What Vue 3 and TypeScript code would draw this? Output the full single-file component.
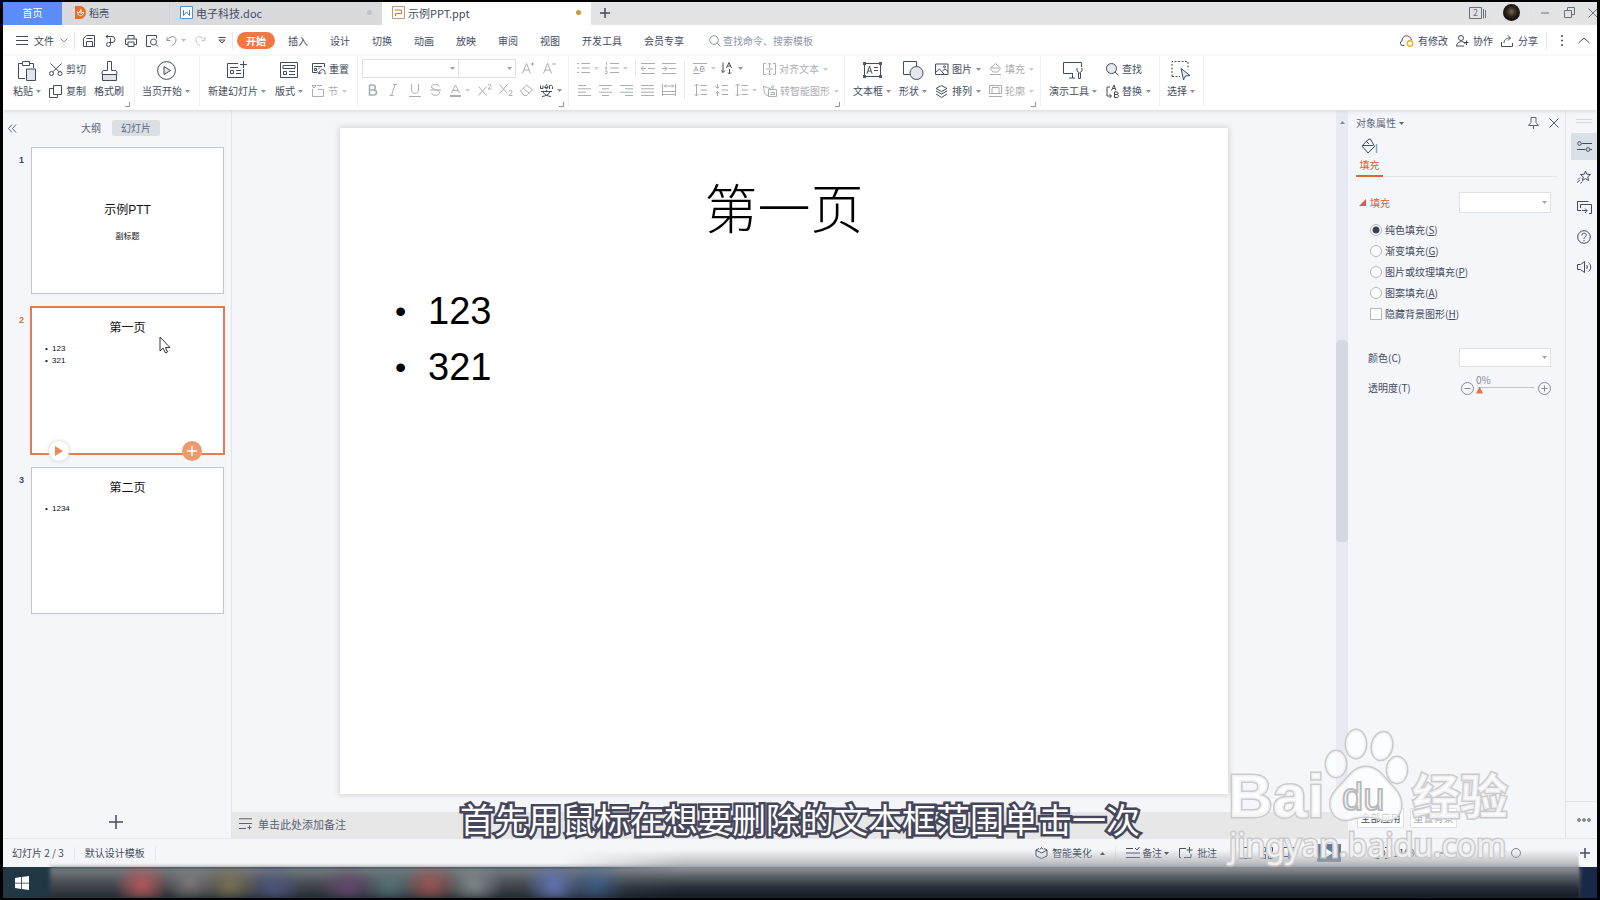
<script setup lang="ts">
import { h, ref } from 'vue'

type IconDef = [number, number, string]

const icons: Record<string, IconDef> = {
  caret: [5, 3, '<path d="M0 0h5L2.5 3z" fill="currentColor" stroke="none"/>'],
  caretUp: [5, 3, '<path d="M0 3h5L2.5 0z" fill="currentColor" stroke="none"/>'],
  corner: [5, 5, '<path d="M4.5 0v4.5H0"/>'],
  docer: [12, 13, '<path d="M1 0h5a6 6.5 0 0 1 0 13H1z" fill="#ee6a26" stroke="none"/><path d="M3.5 6c0 5 6 5 6 0L7 7.500V3.500L5 7z" stroke="#fff"/>'],
  word: [13, 13, '<path d="M.5.5h12v12H.5z" fill="#fff" stroke="#5a8fc4"/><path d="M3.500 4v5.500L6.500 6l3 3.500V4" stroke="#3f7fc0"/>'],
  ppt: [13, 13, '<path d="M.5.5h12v12H.5z" stroke="#c99873"/><path d="M3 4h6.500v3.500H3.500V10" stroke="#b87848"/>'],
  plus: [12, 12, '<path d="M6 1v10M1 6h10" stroke-width="1.5"/>'],
  burger: [12, 9, '<path d="M0 .5h12M0 4.500h12M0 8.500h12"/>'],
  chevDown: [8, 5, '<path d="m.5.5 3.500 3.500L7.500.5"/>'],
  save: [12, 12, '<path d="M.5 11.500v-8l3-3h8v11zM3.500 11V6.500h6V11M3.500 3.500h6"/>'],
  exportP: [12, 12, '<path d="M2 1.500h6a2.500 2.500 0 0 1 0 6H4.500a2 2 0 1 0 2 2V3M4 0 2 1.500 4 3.500"/>'],
  print: [12, 12, '<path d="M3 4V.5h6V4M3 9.500H.5V4h11v5.500H9M3 7h6v4.500H3z"/>'],
  preview: [13, 12, '<path d="M5 11.500H.5V.5h10v3M10 9.500l2 2"/><circle cx="7.500" cy="7" r="3"/>'],
  undo: [11, 10, '<path d="M1 1v3.500h3.500M1 4.500C4-.5 10-.5 10 4c0 3-2 4.500-4 5.500"/>'],
  redo: [11, 10, '<path d="M10 1v3.500H6.500M10 4.500C7-.5 1-.5 1 4c0 3 2 4.500 4 5.500"/>'],
  customise: [8, 7, '<path d="M.5.5h7M1 3l3 3 3-3z"/>'],
  search: [12, 12, '<circle cx="5" cy="5" r="4.300"/><path d="m8 8 3.500 3.500"/>'],
  cloud: [14, 12, '<path d="M4.500 10.500h-2A2.300 2.300 0 0 1 2 6C2-.5 10-1 11.500 5"/><circle cx="10" cy="8.500" r="2.700" stroke="#e9b432" stroke-width="1.500"/><path d="M8 5.500 11 6" stroke="#e9b432"/>'],
  people: [13, 12, '<circle cx="5" cy="3" r="2.500"/><path d="M.5 11.500C.5 5.500 9 5.500 9 9M1 11h7M8 7.500h4.500M10.500 5.500V10"/>'],
  share: [13, 12, '<path d="M.5 7v4.500h11V8M3 8c0-3 2-5 6-5M7 .5 9.500 3 7 5.500"/>'],
  more: [2, 11, '<path d="M0 1h2M0 5.500h2M0 10h2" stroke-width="1.500"/>'],
  chevUp: [12, 7, '<path d="m.5 6 5.500-5 5.500 5"/>'],
  windows2: [17, 12, '<path d="M.5.5h12v11H.5zM14.500 2v9.500M16.500 3v8"/>'],
  min: [8, 2, '<path d="M0 1h8"/>'],
  restore: [11, 11, '<path d="M.5 3.500h7v7h-7zM3.500 3V.5h7v7H8"/>'],
  close: [10, 10, '<path d="m.5.500 9 9m0-9-9 9"/>'],
  paste: [19, 20, '<path d="M7 17.500H.5v-15H4M12 2.500h3.500V7M4.500.5h7v4h-7z"/><path d="M8.500 8h9v11.500h-9z" fill="#e1e4ea"/>'],
  cut: [14, 13, '<path d="M3.500 9 12.500.5M10.500 9 1.500.5"/><circle cx="2.500" cy="10.500" r="2"/><circle cx="11" cy="10.500" r="2"/>'],
  copy: [14, 13, '<path d="M4.500.5h8v9h-8zM4 3.500H.5v9h8V10"/>'],
  brush: [17, 20, '<path d="M6.500 9.500v-9h4v9H14c2 0 2 2 2 4H1c0-2 0-4 2-4z"/><path d="M1.500 13.500h14v6h-14z" fill="#dfe2e8"/>'],
  playCircle: [19, 19, '<circle cx="9.500" cy="9.500" r="8.900"/><path d="M7 5.500 13.500 9.500 7 13.500z" fill="#e1e4ea"/>'],
  newSlide: [20, 18, '<path d="M11 2.500H.5v14h16V8M16.500 0v7M13 3.500h7M3 6.500h8M3.500 9.500h3v3h-3zM9 9.500h5M9 12.500h5"/>'],
  layout: [19, 18, '<path d="M.5 1.500h17v15H.5zM3 4.500h12v3H3zM3.500 10.500h3v3h-3zM9 10.500h6M9 13.500h6"/>'],
  reset: [14, 12, '<path d="M5 9.500H.5V.5h12V4M2 3.500h8M2.500 5.500h2v2h-2zM6 6.500l2-2M13 11.500c1-6-5-7-6-1M5.500 8.500 7 11l2.500-1.500"/>'],
  section: [13, 12, '<path d="M0 .5h4L2 3zM5 .5h5M.5 4v7.500h11v-7H6"/>'],
  bold: [10, 12, '<path d="M1.500 1v10h4c4 0 4-5 0-5H2M5 6c3 0 3-5 0-5H1.500" stroke-width="1.600"/>'],
  italic: [9, 12, '<path d="M4 .5h4M.5 11.500h4M6 .5l-3.500 11"/>'],
  underline: [12, 13, '<path d="M2.500 0v6c0 4.500 7 4.500 7 0V0M0 12.500h12"/>'],
  strike: [11, 12, '<path d="M9.500 2.500C8-.5 1-.5 1.500 3c.5 3 8 2 8 5.500s-7 4-8 .5M0 6h11"/>'],
  fontColor: [11, 13, '<path d="m1.500 9 4-8 4 8M3 6.500h5"/><path d="M0 12h11" stroke-width="2"/>'],
  sup: [14, 12, '<path d="m.5 2.500 8 9m0-9-8 9M10 1c2-2 4 0 2.500 1.500L10 5h3.500"/>'],
  sub: [14, 12, '<path d="m.5.500 8 9m0-9-8 9M10 7.500c2-2 4 0 2.500 1.500L10 11.500h3.500"/>'],
  eraser: [13, 12, '<path d="m.5 7 6-6 6 5-6 5.500H4zM3.500 4.500 9 9"/>'],
  pinyin: [13, 13, '<path d="M.5 1.500v3H3v-3M4.500 3.500H8c0-3-3-2.500-3-.5 0 1.500 1 1.500 2.500 1.500M9.500 5V1.500c3-.5 3 0 3 3.500M6.500.5l1-.5M1 7.500h11M6.500 6v1.500M3 8c1.500 3 4.500 4 8 4.500M10 8c-1.500 3-4.500 4-8 4.500"/>'],
  fontUp: [13, 12, '<path d="m.5 11.500 4-10 4 10M2 8h5M8.500 2h4M10.500 0v4"/>'],
  fontDown: [13, 12, '<path d="m.5 11.500 4-10 4 10M2 8h5M9 2h4"/>'],
  bullets: [13, 12, '<path d="M0 1.500h2M0 6h2M0 10.500h2M4.500 1.500H13M4.500 6H13M4.500 10.500H13"/>'],
  numbers: [14, 12, '<path d="M1.500 0v3M0 5h2L.500 7H2M0 9h2v2.500H0M5 1.500h9M5 6h9M5 10.500h9"/>'],
  outdent: [14, 11, '<path d="M0 .5h14M7 5.500h7M0 10.500h14M0 5.500h5M2.500 3 0 5.500 2.500 8"/>'],
  indent: [14, 11, '<path d="M0 .5h14M7 5.500h7M0 10.500h14M0 5.500h5M2.500 3 5 5.500 2.500 8"/>'],
  ab: [14, 11, '<path d="M0 .5h14M0 10.500h7M1 8.500l2-5 2 5M1.500 7h3M7.500 3.500v5h2.500c2 0 2-2.500 0-2.500H7.500M10 6c1.500 0 1.500-2.500 0-2.500H7.500"/>'],
  sortA: [13, 12, '<path d="M2 .5v10M.5 8.500 2 10.500l2-2M5.500 6l2.500-5.500L10.500 6M6.500 4h3M8.500 7v5M7 10.500l1.500 1.500L10 10.500"/>'],
  left: [13, 11, '<path d="M0 .5h8M0 3.800h13M0 7.200h8M0 10.500h13"/>'],
  center: [13, 11, '<path d="M0 .5h13M3 3.800h7M0 7.200h13M3 10.500h7"/>'],
  right: [13, 11, '<path d="M0 .5h13M5 3.800h8M0 7.200h13M5 10.500h8"/>'],
  justify: [13, 11, '<path d="M0 .5h13M0 3.800h13M0 7.200h13M0 10.500h13"/>'],
  spread: [14, 12, '<path d="M.5 0v12M13.500 0v12M2 2h10M4 .5 2.500 2 4 3.500M10 .5 11.500 2 10 3.500M1 7.500h12M1 10.500h12"/>'],
  lineUp: [13, 12, '<path d="M2.500 0v12M.5 2 2.500 0l2 2M.5 10l2 2 2-2M6.500 1.500H13M6.500 6H13M6.500 10.500H13"/>'],
  lineIn: [13, 12, '<path d="M2.500 0v4M.5 2.500l2 2 2-2M2.500 12V7.500M.5 9.500l2-2 2 2M6.500 1.500H13M6.500 6H13M6.500 10.500H13"/>'],
  alignText: [13, 12, '<path d="M3 .5H.5v11H3M10 .5h2.500v11H10M3 6h7M6.500 0v5M5 1.500 6.500 0 8 1.500M6.500 7v5M5 10.500 6.500 12 8 10.500"/>'],
  smart: [14, 12, '<path d="M5 10.500C2 10 1 8 .5 1l3 1.500 4 1 2.500-3V4M5.500 4.500h8v7h-8zM7.500 7.500h4v2h-4"/>'],
  textBox: [19, 18, '<path d="M1.500 2.500h16v13h-16zM4 12.500 6.500 5 9 12.500M5 10h3M11 6.500h4M11 9.500h4"/><path d="M0 1h3v3H0zM16 1h3v3h-3zM0 14h3v3H0zM16 14h3v3h-3z" fill="#525a6b" stroke="none"/>'],
  shape: [21, 19, '<path d="M.5.5h13v13H.5z" fill="#fff"/><circle cx="13.500" cy="12" r="6.500" fill="#e4e7ef"/>'],
  picture: [14, 12, '<path d="M.5 1h12.500v10.500H.5zM1 9l3.500-3L9 11M7.500 8 10 6l3 2.500"/><circle cx="9.500" cy="3.800" r="1"/>'],
  arrange: [14, 13, '<path d="M6.500.5 12 3.500 6.500 6.500 1 3.500zM1 6l5.500 3L12 6M1 9l5.500 3.500L12 9"/>'],
  fillTool: [13, 12, '<path d="m6.500.5 5 4.500-3 4H4L1 5.500zM2 5h8M1 11.500h11"/>'],
  outline: [13, 12, '<path d="M.5.5h12v8H.5zM3 2.500h7v6H3zM0 11.500h13"/>'],
  present: [21, 18, '<path d="M10 12.500H.5v-11h18V6M9.500 13v4M6 17h6M14 7v3l2.500 2L19 10V7M15.500 12v5.500h2V12"/>'],
  find: [13, 13, '<circle cx="5.500" cy="5.500" r="5" fill="#e6e9f0"/><path d="m9 9 3.500 3.500"/>'],
  replace: [13, 13, '<path d="M4 2H1v9h4M3.500 9 5.500 11l-2 2M5.500 5.500 8 0l2 5.500M6.500 3.500h3M8.500 7v5.500H11c2 0 2-3 0-3H8.500M11 9.500c1.500 0 1.500-2.500 0-2.500H8.500"/>'],
  select: [20, 20, '<path d="M1 15.500V.5h16v8M1 15.500h8" stroke-dasharray="2 1.500"/><path d="m10 7.500 9 7-4.500.5-2 4z" fill="#e4e7ee"/>'],
  collapse: [9, 9, '<path d="m4 .5-3.500 4 3.500 4m4-8-3.500 4 3.500 4"/>'],
  bigPlus: [14, 14, '<path d="M7 0v14M0 7h14" stroke-width="1.500"/>'],
  play: [8, 10, '<path d="m0 0 8 5-8 5z" fill="currentColor" stroke="none"/>'],
  pointer: [12, 18, '<path d="M1 1v14l3-3 2.500 5 2-1-2-4.500H11z" fill="#fff" stroke="#333"/>'],
  notes: [14, 12, '<path d="M0 .8h13M0 5.500h13M0 10.500h7M8.500 9.500h4M10.500 7.500v4"/>'],
  cube: [13, 12, '<path d="M4 1.500 1 3v6l5.500 2.500L12 9V3L9 1.500M1 3l5.500 3L12 3M5 2.500 6.500.5 8 2.500"/>'],
  remark: [14, 12, '<path d="M0 1.500h7M9 1l2 2 2.500-3M0 6h14M0 10.500h14"/>'],
  comment: [14, 12, '<path d="M7 1.500H.5v9H2M5 10.500h7V7M10.500 0v6M7.500 3h6"/>'],
  viewA: [13, 12, '<path d="M.5.5h12v11H.5zM4.500 0v12"/>'],
  viewB: [12, 12, '<path d="M.5.5h4v4h-4zM7.500.5h4v4h-4zM.5 7.500h4v4h-4zM7.500 7.500h4v4h-4z"/>'],
  viewC: [12, 12, '<path d="M5 .5H.5v9H5M7 .5h4.500v9H7M6 0v12"/>'],
  fit: [14, 12, '<path d="M.5 3V.5H4M10 .5h3.500V3M13.500 9v2.500H10M4 11.500H.5V9"/><circle cx="7" cy="6" r="3"/>'],
  pin: [11, 12, '<path d="M3 .5h5v5l2.500 3H.5L3 5.500zM5.500 8.500V12"/>'],
  bucket: [17, 16, '<path d="M7 1.500 1 8l6 7 6.500-6.500L9.500 1 7 1.500M2 7.500h10M5 3l3 3"/><path d="M15.500 6v9" stroke="#7fa9d0" stroke-width="1.500"/>'],
  sliders: [15, 11, '<circle cx="2.500" cy="2.500" r="1.800"/><path d="M5 2.500h10M0 8.500h8.500"/><circle cx="11" cy="8.500" r="1.800"/><path d="M13 8.500h2"/>'],
  star: [14, 14, '<path d="m8.500 1 1.300 3.200 3.700.3-2.800 2.400.9 3.600-3.100-1.900-3.100 1.900.9-3.600L3.500 4.500l3.700-.3zM1 9.500l2-2M0 12.500l3-2.500M3.500 13.500l2-2"/>'],
  copyPane: [15, 13, '<path d="M4 9.500H.5v-9h11M12 3.500h2.500v9H12M3.500 3.500H12M3.500 3.500V7M5 9.500h5M8 7.500l2 2-2 2.500"/>'],
  help: [14, 14, '<circle cx="7" cy="7" r="6.300"/><path d="M4.800 5.500c0-3 4.500-3 4.500-.3C9.300 7 7 7 7 8.700M7 10v1.200"/>'],
  sound: [15, 12, '<path d="M.5 3.500h3l4-3v11l-4-3h-3zM9.500 4c1 1 1 3 0 4M11.500 1.500c3 2.500 3 6.500 0 9"/>'],
  dots: [14, 4, '<circle cx="2" cy="2" r="1.300"/><circle cx="7" cy="2" r="1.300"/><circle cx="12" cy="2" r="1.300"/>'],
  minusRound: [13, 13, '<circle cx="6.500" cy="6.500" r="6"/><path d="M3.500 6.500h6"/>'],
  plusRound: [13, 13, '<circle cx="6.500" cy="6.500" r="6"/><path d="M3.500 6.500h6M6.500 3.500v6"/>'],
  triangle: [7, 7, '<path d="M7 0v7H0z" fill="#d95f33" stroke="none"/>'],
  start: [14, 14, '<path d="M0 2 6 1v5.700H0zM6.800.9 14 0v6.700H6.800zM0 7.400h6v5.700L0 12zM6.800 7.400H14V14l-7.200-.9z" fill="#fff" stroke="none"/>'],
}

const Icon = (props: { n: string }) => {
  const [w, ht, body] = icons[props.n]
  return h('svg', { width: w, height: ht, viewBox: `0 0 ${w} ${ht}`, fill: 'none', stroke: 'currentColor', 'stroke-width': 1, 'aria-hidden': 'true', innerHTML: body })
}
Icon.props = ['n']

const quick = ['save', 'exportP', 'print', 'preview']
const menus = ['开始', '插入', '设计', '切换', '动画', '放映', '审阅', '视图', '开发工具', '会员专享']
const fontTools = ['bold', 'italic', 'underline', 'strike']
const aligns = ['left', 'center', 'right', 'justify', 'spread']
const slides = [
  { title: '示例PTT', sub: '副标题', items: [] as string[] },
  { title: '第一页', sub: '', items: ['123', '321'] },
  { title: '第二页', sub: '', items: ['1234'] },
]
const active = ref(1)
const fills = [
  { text: '纯色填充', key: 'S' },
  { text: '渐变填充', key: 'G' },
  { text: '图片或纹理填充', key: 'P' },
  { text: '图案填充', key: 'A' },
]
const fill = ref('S')
const opacity = ref(0)
const rail = ['sliders', 'star', 'copyPane', 'help', 'sound']
</script>

<template>
  <div class="app">
    <header class="tabs">
      <button class="tab home">首页</button>
      <button class="tab docer"><Icon n="docer" />稻壳</button>
      <button class="tab doc"><Icon n="word" />电子科技.doc<i class="dot"></i></button>
      <button class="tab ppt"><Icon n="ppt" />示例PPT.ppt<i class="dot gold"></i></button>
      <button class="add" aria-label="新建"><Icon n="plus" /></button>
      <div class="win">
        <button class="count" aria-label="窗口"><Icon n="windows2" /><span>2</span></button>
        <i class="sep"></i>
        <span class="avatar"></span>
        <i class="sep"></i>
        <button aria-label="最小化"><Icon n="min" /></button>
        <button aria-label="还原"><Icon n="restore" /></button>
        <button aria-label="关闭"><Icon n="close" /></button>
      </div>
    </header>

    <nav class="menu">
      <button class="file"><Icon n="burger" />文件<Icon n="chevDown" class="faint" /></button>
      <i class="sep"></i>
      <div class="quick">
        <button v-for="q in quick" :key="q" class="t" :aria-label="q"><Icon :n="q" /></button>
        <button class="t wide faint" aria-label="撤销"><Icon n="undo" /><Icon n="caret" /></button>
        <button class="t pale" aria-label="恢复"><Icon n="redo" /></button>
        <button class="t" aria-label="自定义"><Icon n="customise" /></button>
      </div>
      <i class="sep"></i>
      <div class="items">
        <button v-for="(m, i) in menus" :key="m" :class="{ on: i === 0 }">{{ m }}</button>
      </div>
      <label class="search"><Icon n="search" /><input type="text" placeholder="查找命令、搜索模板" aria-label="查找命令、搜索模板" /></label>
      <div class="account">
        <button><Icon n="cloud" />有修改</button>
        <button><Icon n="people" />协作</button>
        <button><Icon n="share" />分享</button>
        <i class="sep"></i>
        <button aria-label="更多"><Icon n="more" /></button>
        <button aria-label="收起"><Icon n="chevUp" /></button>
      </div>
    </nav>

    <section class="ribbon">
      <div class="group g1">
        <button class="big"><Icon n="paste" /><span>粘贴<Icon n="caret" /></span></button>
        <div class="stack">
          <button><Icon n="cut" />剪切</button>
          <button><Icon n="copy" />复制</button>
        </div>
        <button class="big"><Icon n="brush" /><span>格式刷</span></button>
        <Icon n="corner" class="corner" />
      </div>
      <div class="group g2">
        <button class="big"><Icon n="playCircle" /><span>当页开始<Icon n="caret" /></span></button>
      </div>
      <div class="group g3">
        <button class="big"><Icon n="newSlide" /><span>新建幻灯片<Icon n="caret" /></span></button>
        <button class="big"><Icon n="layout" /><span>版式<Icon n="caret" /></span></button>
        <div class="stack">
          <button><Icon n="reset" />重置</button>
          <button class="off"><Icon n="section" />节<Icon n="caret" /></button>
        </div>
      </div>
      <div class="group g4">
        <div class="rows off">
          <div class="row">
            <div class="combo"><select class="face" aria-label="字体"></select><Icon n="caret" /></div>
            <div class="combo"><select class="size" aria-label="字号"></select><Icon n="caret" /></div>
            <button class="t" aria-label="增大字号"><Icon n="fontUp" /></button>
            <button class="t" aria-label="减小字号"><Icon n="fontDown" /></button>
          </div>
          <div class="row">
            <button v-for="f in fontTools" :key="f" class="t" :aria-label="f"><Icon :n="f" /></button>
            <button class="t wide" aria-label="字体颜色"><Icon n="fontColor" /><Icon n="caret" /></button>
            <button class="t" aria-label="上标"><Icon n="sup" /></button>
            <button class="t" aria-label="下标"><Icon n="sub" /></button>
            <button class="t" aria-label="清除格式"><Icon n="eraser" /></button>
            <button class="t wide live" aria-label="拼音"><Icon n="pinyin" /><Icon n="caret" /></button>
          </div>
        </div>
        <Icon n="corner" class="corner" />
      </div>
      <div class="group g5">
        <div class="rows off">
          <div class="row">
            <button class="t wide" aria-label="项目符号"><Icon n="bullets" /><Icon n="caret" /></button>
            <button class="t wide" aria-label="编号"><Icon n="numbers" /><Icon n="caret" /></button>
            <i class="sep"></i>
            <button class="t" aria-label="减少缩进"><Icon n="outdent" /></button>
            <button class="t" aria-label="增加缩进"><Icon n="indent" /></button>
          </div>
          <div class="row">
            <button v-for="a in aligns" :key="a" class="t" :aria-label="a"><Icon :n="a" /></button>
          </div>
        </div>
        <i class="sep tall"></i>
        <div class="rows off">
          <div class="row">
            <button class="t wide" aria-label="字符间距"><Icon n="ab" /><Icon n="caret" /></button>
            <button class="t wide live" aria-label="文字方向"><Icon n="sortA" /><Icon n="caret" /></button>
          </div>
          <div class="row">
            <button class="t" aria-label="段前"><Icon n="lineUp" /></button>
            <button class="t" aria-label="段后"><Icon n="lineIn" /></button>
            <button class="t wide" aria-label="行距"><Icon n="lineUp" /><Icon n="caret" /></button>
          </div>
        </div>
        <div class="stack off">
          <button><Icon n="alignText" />对齐文本<Icon n="caret" /></button>
          <button><Icon n="smart" />转智能图形<Icon n="caret" /></button>
        </div>
        <Icon n="corner" class="corner" />
      </div>
      <div class="group g6">
        <button class="big"><Icon n="textBox" /><span>文本框<Icon n="caret" /></span></button>
        <button class="big"><Icon n="shape" /><span>形状<Icon n="caret" /></span></button>
        <div class="stack">
          <button><Icon n="picture" />图片<Icon n="caret" /></button>
          <button><Icon n="arrange" />排列<Icon n="caret" /></button>
        </div>
        <div class="stack off">
          <button><Icon n="fillTool" />填充<Icon n="caret" /></button>
          <button><Icon n="outline" />轮廓<Icon n="caret" /></button>
        </div>
        <Icon n="corner" class="corner" />
      </div>
      <div class="group g7">
        <button class="big"><Icon n="present" /><span>演示工具<Icon n="caret" /></span></button>
        <div class="stack">
          <button><Icon n="find" />查找</button>
          <button><Icon n="replace" />替换<Icon n="caret" /></button>
        </div>
      </div>
      <div class="group g8">
        <button class="big"><Icon n="select" /><span>选择<Icon n="caret" /></span></button>
      </div>
    </section>

    <main class="body">
      <aside class="outline">
        <div class="switch">
          <button class="fold" aria-label="折叠"><Icon n="collapse" /></button>
          <button>大纲</button>
          <button class="on">幻灯片</button>
        </div>
        <ol class="thumbs">
          <li v-for="(s, i) in slides" :key="i" :class="{ on: i === active }">
            <span class="num">{{ i + 1 }}</span>
            <button class="thumb" :class="{ cover: s.sub }" @click="active = i">
              <span class="tt">{{ s.title }}</span>
              <span v-if="s.sub" class="ts">{{ s.sub }}</span>
              <span v-for="t in s.items" :key="t" class="ti">{{ t }}</span>
            </button>
            <template v-if="i === active">
              <button class="round run" aria-label="播放"><Icon n="play" /></button>
              <button class="round ins" aria-label="新建幻灯片"><Icon n="plus" /></button>
              <Icon n="pointer" class="pointer" />
            </template>
          </li>
        </ol>
        <button class="new" aria-label="新建幻灯片"><Icon n="bigPlus" /></button>
      </aside>

      <section class="work">
        <div class="stage">
          <div class="canvas">
            <article class="slide">
              <h1>第一页</h1>
              <ul>
                <li>123</li>
                <li>321</li>
              </ul>
            </article>
          </div>
          <div class="scroll"><Icon n="caretUp" /><i class="bar"></i></div>
        </div>
        <div class="notes"><Icon n="notes" />单击此处添加备注</div>
      </section>

      <aside class="props">
        <div class="head">
          <button>对象属性<Icon n="caret" /></button>
          <span class="grow"></span>
          <button aria-label="固定"><Icon n="pin" /></button>
          <button aria-label="关闭"><Icon n="close" /></button>
        </div>
        <div class="ptabs">
          <button><Icon n="bucket" /><span>填充</span></button>
        </div>
        <div class="line title">
          <span class="sect"><Icon n="triangle" />填充</span>
          <div class="combo"><select aria-label="填充"></select><Icon n="caret" /></div>
        </div>
        <div class="opts">
          <label v-for="f in fills" :key="f.key">
            <input v-model="fill" type="radio" name="fill" :value="f.key" />{{ f.text }}(<u>{{ f.key }}</u>)
          </label>
          <label><input type="checkbox" />隐藏背景图形(<u>H</u>)</label>
        </div>
        <div class="line color">
          <label for="color">颜色(C)</label>
          <div class="combo"><select id="color"></select><Icon n="caret" /></div>
        </div>
        <div class="line alpha">
          <label for="alpha">透明度(T)</label>
          <div class="slider">
            <button aria-label="减少"><Icon n="minusRound" /></button>
            <div class="track">
              <output for="alpha">{{ opacity }}%</output>
              <input id="alpha" v-model="opacity" type="range" min="0" max="100" />
            </div>
            <button aria-label="增加"><Icon n="plusRound" /></button>
          </div>
        </div>
        <div class="apply">
          <button>全部应用</button>
          <button class="off">重置背景</button>
        </div>
      </aside>

      <aside class="rail">
        <i class="grip"></i>
        <button v-for="(r, i) in rail" :key="r" :class="{ on: i === 0 }" :aria-label="r"><Icon :n="r" /></button>
        <button class="etc" aria-label="更多"><Icon n="dots" /></button>
      </aside>
    </main>

    <footer class="status">
      <span>幻灯片 2 / 3</span>
      <i class="sep"></i>
      <span>默认设计模板</span>
      <i class="sep"></i>
      <div class="tools">
        <button><Icon n="cube" />智能美化<Icon n="caretUp" class="up" /></button>
        <i class="sep"></i>
        <button class="rem"><Icon n="remark" />备注<Icon n="caret" /></button>
        <button class="cmt"><Icon n="comment" />批注</button>
        <button class="view" aria-label="普通视图"><Icon n="viewA" /></button>
        <button class="view" aria-label="浏览视图"><Icon n="viewB" /></button>
        <button class="view" aria-label="阅读视图"><Icon n="viewC" /></button>
        <button class="show" aria-label="放映"><Icon n="play" /></button>
        <button class="zoom"><Icon n="fit" />110%</button>
        <button class="view" aria-label="缩小"><Icon n="min" /></button>
        <i class="knob"></i>
        <button class="view" aria-label="放大"><Icon n="plus" /></button>
      </div>
    </footer>

    <div class="taskbar">
      <button aria-label="开始"><Icon n="start" /></button>
      <div class="apps"></div>
      <div class="tail"></div>
    </div>

    <div class="haze"></div>
    <p class="caption">首先用鼠标在想要删除的文本框范围单击一次</p>

    <svg class="mark" width="300" height="146" viewBox="0 0 300 146" aria-label="Baidu经验">
      <g fill="#fff" fill-opacity=".72" stroke="#cbcbcd" stroke-width="3" paint-order="stroke">
        <ellipse cx="110" cy="43" rx="10" ry="13" />
        <ellipse cx="130" cy="23" rx="10" ry="14" />
        <ellipse cx="156" cy="25" rx="10" ry="14" transform="rotate(12 156 25)" />
        <ellipse cx="171" cy="49" rx="10" ry="13" />
        <path d="M140 46C128 46 123 56 115 64C107 72 103 78 105 87C108 99 120 101 128 97C136 95 144 95 152 97C161 101 173 99 175 87C176 77 172 71 165 64C157 56 152 46 140 46Z" />
        <text x="2" y="96" class="lat">Bai</text>
        <text x="186" y="93" class="han">经验</text>
        <text x="3" y="136" class="url">jingyan.baidu.com</text>
      </g>
      <text x="116" y="89" class="du">du</text>
    </svg>
  </div>
</template>

<style>
body { margin: 0; background: #000; }
</style>

<style scoped>
.app {
  position: relative;
  box-sizing: border-box;
  height: 100vh;
  display: flex;
  flex-direction: column;
  border: solid #000;
  border-width: 2px 3px;
  background: #f5f6f9;
  color: #434b5e;
  font: 10px/14px "Noto Sans CJK SC", "Noto Sans", sans-serif;
  overflow: hidden;
}
.app *, .app *::before, .app *::after { box-sizing: border-box; }
button, input, select { font: inherit; color: inherit; }
button { display: flex; align-items: center; padding: 0; border: 0; background: none; white-space: nowrap; }
svg { flex: none; display: block; }
.sep { flex: none; width: 1px; height: 18px; background: #e4e6e9; }
.off { color: #a9adb5; }
.faint { color: #8c93a1; }
.pale { color: #c3c7cd; }

.tabs { display: flex; flex: none; height: 23px; background: #e2e3e5; }
.tab { gap: 3px; padding: 0 10px 2px; background: #d9dade; font-size: 11px; }
.tab.home { width: 59px; justify-content: center; background: #5a8df8; color: #fff; font-size: 10px; }
.tab.docer { width: 108px; padding-left: 12px; border-right: 1px solid #d0d2d6; font-size: 10px; }
.tab.doc { width: 212px; }
.tab.ppt { width: 209px; background: #fff; }
.dot { width: 5px; height: 5px; margin-left: auto; border-radius: 50%; background: #c0c2c7; }
.dot.gold { background: #d09a2c; }
.add { margin-left: 8px; padding-bottom: 2px; }
.win { display: flex; align-items: center; margin-left: auto; gap: 8px; padding-bottom: 2px; }
.win button { width: 16px; justify-content: center; color: #6a7080; }
.win .count { display: grid; align-items: center; width: 17px; justify-content: start; }
.count > * { grid-area: 1 / 1; }
.count span { width: 13px; font-size: 9px; }
.avatar { width: 17px; height: 17px; border-radius: 50%; background: radial-gradient(circle at 50% 45%, #7a6650 0, #33291e 35%, #100d0a 70%); }
.win button:last-child { margin-right: -4px; }

.menu { display: flex; flex: none; align-items: center; height: 31px; background: #fff; }
.file { width: 71px; padding-left: 13px; gap: 6px; }
.quick { display: flex; width: 157px; padding-left: 4px; }
.t { width: 21px; height: 18px; justify-content: center; }
.t.wide { width: 28px; gap: 4px; }
.items { display: flex; gap: 4px; padding-left: 4px; }
.items button { height: 17px; padding: 0 9px; border-radius: 9px; }
.items .on { background: #f07846; color: #fff; font-weight: 700; }
.search { display: flex; align-items: center; gap: 2px; margin-left: 16px; color: #8d95a8; }
.search input { width: 110px; padding: 0; border: 0; outline: 0; background: none; }
.search input::placeholder { color: #8d95a8; opacity: 1; }
.account { display: flex; align-items: center; gap: 8px; margin-left: auto; padding-right: 7px; }
.account button { gap: 4px; }
.account .sep + button { margin: 0 7px 0 6px; }

.ribbon { display: flex; flex: none; height: 54px; background: #fff; box-shadow: 0 1px 4px #d2d4d8; position: relative; }
.group { position: relative; display: flex; align-items: flex-start; height: 51px; border-right: 1px solid #f0f1f4; }
.big { flex-direction: column; justify-content: space-between; height: 37px; margin-top: 5px; }
.big > svg { margin: 0 auto; }
.big span { display: flex; align-items: center; gap: 3px; height: 14px; }
.big span svg, .stack button svg:nth-child(2), .t svg:nth-child(2) { opacity: .6; }
.stack { display: flex; flex-direction: column; gap: 8px; margin-top: 6px; }
.stack button { height: 14px; gap: 3px; }
.stack button svg:nth-child(2) { margin-left: 1px; }
.corner { position: absolute; right: 4px; bottom: 0; color: #8f949e; }
.g1 { width: 132px; padding-left: 10px; gap: 8px; }
.g2 { width: 65px; padding-left: 7px; }
.g3 { width: 158px; padding-left: 8px; gap: 9px; }
.g4 { width: 211px; padding-left: 4px; }
.g5 { width: 276px; padding-left: 5px; }
.g6 { width: 196px; padding-left: 8px; gap: 8px; }
.g7 { width: 119px; padding-left: 8px; gap: 9px; }
.g8 { width: 44px; padding-left: 7px; }
.rows { display: flex; flex-direction: column; gap: 2px; margin-top: 2px; }
.row { display: flex; align-items: center; height: 20px; }
.live { color: #434b5e; }
.combo { display: grid; align-items: center; }
.combo > * { grid-area: 1 / 1; }
.combo svg { justify-self: end; margin-right: 4px; pointer-events: none; color: #a0a4ad; }
.combo select { appearance: none; height: 19px; border: 1px solid #dfe1e5; border-radius: 0; background: #fff; }
.combo .face { width: 97px; }
.combo .size { width: 58px; margin-left: -1px; }
.combo + .t { margin-left: 2px; }
.g5 .row .sep { margin: 0 1px 0 5px; }
.g5 .tall { height: 38px; margin: 5px 5px 0; }
.g5 .stack { margin-left: 3px; }

.body { display: flex; flex: 1; min-height: 0; }
.outline { display: flex; flex-direction: column; width: 229px; border-right: 1px solid #e2e4e9; }
.switch { display: flex; align-items: center; padding: 10px 0 0 5px; color: #5c667c; }
.switch button { height: 16px; padding: 0 9px; border-radius: 2px; }
.switch .fold { padding: 0; margin-right: 55px; }
.switch .on { margin-left: 2px; background: #dbdfe5; }
.thumbs { display: flex; flex-direction: column; gap: 13px; margin: 0; padding: 11px 7px 0 16px; list-style: none; }
.thumbs li { position: relative; display: flex; }
.num { width: 12px; padding-top: 7px; font: 700 9px/12px "Liberation Sans", Arial, sans-serif; }
.on .num { color: #c07a3c; }
.thumb { flex: 1; flex-direction: column; align-items: stretch; height: 147px; padding-top: 13px; border: 1px solid #c3c7cc; background: #fff; color: #111; font-family: "Liberation Sans", Arial, "Noto Sans CJK SC", sans-serif; text-align: center; }
.on .thumb { border-color: #e07c58; outline: 1px solid #e07c58; }
.thumb.cover { padding-top: 55px; }
.tt { font-size: 12px; line-height: 14px; margin-bottom: 8px; }
.cover .tt { margin-bottom: 14px; }
.ts { font-size: 8px; line-height: 12px; }
.ti { font-size: 8px; line-height: 12px; text-align: left; padding-left: 13px; }
.ti::before { content: "•"; display: inline-block; width: 7px; }
.round { position: absolute; bottom: -7px; width: 20px; height: 20px; justify-content: center; border-radius: 50%; }
.run { left: 30px; background: #fff; color: #ef8a52; box-shadow: 0 0 4px #c9cbd0; }
.ins { right: 22px; background: #f09a6c; color: #fff; }
.pointer { position: absolute; left: 140px; top: 29px; }
.new { margin: auto auto 9px 106px; }

.work { flex: 1; min-width: 0; display: flex; flex-direction: column; }
.stage { flex: 1; min-height: 0; display: flex; }
.canvas { flex: 1; display: flex; justify-content: center; padding: 18px 0; }
.slide { height: 100%; aspect-ratio: 4 / 3; padding: 53px 50px; background: #fff; color: #000; box-shadow: 0 0 6px 1px #d0d2d6; }
.slide h1 { margin: 0; font: 300 53px/60px "Liberation Serif", "Noto Sans CJK SC", serif; text-align: center; }
.slide ul { margin: 42px 0 0; padding: 0 0 0 5px; list-style: none; font: 38px/56px "Liberation Sans", Arial, sans-serif; }
.slide li { display: flex; align-items: center; height: 56px; }
.slide li::before { content: "•"; width: 33px; font-size: 32px; }
.scroll { width: 12px; padding-top: 11px; background: #e8eaf1; color: #858a95; }
.scroll svg { margin: 0 auto; }
.bar { display: block; height: 202px; margin-top: 216px; border-radius: 5px 5px 4px 4px; background: #d4d8e3; }
.notes { display: flex; flex: none; align-items: center; gap: 5px; height: 26px; padding: 0 0 3px 7px; background: #e7e7e7; font-size: 11px; color: #5a6072; }

.props { display: flex; flex-direction: column; width: 218px; padding: 6px 8px 10px; border-right: 1px solid #e1e3e8; }
.head { display: flex; align-items: center; gap: 10px; height: 14px; margin-right: -2px; color: #5a647a; }
.head button { gap: 3px; }
.grow { flex: 1; }
.ptabs { display: flex; height: 47px; border-bottom: 1px solid #e2e4e8; }
.ptabs button { flex-direction: column; width: 27px; padding-top: 8px; height: 47px; gap: 4px; border-bottom: 2px solid #d9693c; }
.ptabs span { color: #d9622f; }
.line { display: flex; align-items: center; justify-content: space-between; padding: 0 6px 0 12px; }
.title { margin-top: 15px; padding-left: 3px; }
.sect { display: flex; align-items: center; gap: 4px; color: #d9622f; }
.line select { width: 92px; height: 21px; }
.color { margin-top: 24px; }
.color select { height: 19px; }
.opts { display: flex; flex-direction: column; margin-top: 6px; padding-left: 14px; }
.opts label { display: flex; align-items: center; height: 21px; }
.opts input { appearance: none; width: 12px; height: 12px; margin: 0 3px 0 0; border: 1px solid #b4b8bf; background: #fff; }
.opts input[type="radio"] { border-radius: 50%; }
.opts input:checked { background: radial-gradient(circle, #3a4054 0 3px, #fff 4px); }
.alpha { margin-top: 7px; align-items: flex-end; }
.slider { display: flex; align-items: flex-end; gap: 2px; color: #858b97; }
.track { display: flex; flex-direction: column; width: 60px; }
.track output { height: 11px; line-height: 11px; }
.track input { appearance: none; width: 60px; height: 10px; margin: 0; background: linear-gradient(#bfc2c7, #bfc2c7) no-repeat 2px 2px / 56px 1px; }
.track input::-webkit-slider-thumb { appearance: none; width: 7px; height: 7px; background: #e8733f; clip-path: polygon(50% 0, 100% 100%, 0 100%); }
.apply { display: flex; gap: 6px; margin-top: auto; padding-left: 1px; }
.apply button { width: 47px; height: 20px; justify-content: center; border: 1px solid #dfe1e5; background: #fff; }

.rail { display: flex; flex-direction: column; align-items: flex-end; width: 31px; padding-top: 9px; }
.rail button { width: 26px; height: 30px; justify-content: center; }
.rail .on { height: 27px; margin-bottom: 2px; background: #dbdfe6; }
.grip { width: 16px; height: 4px; margin: 0 5px 10px; border: solid #d4d7dc; border-width: 1px 0; }
.rail .etc { width: 31px; height: 37px; margin-top: auto; padding-left: 5px; border-top: 1px solid #e0e2e7; }

.status { display: flex; flex: none; align-items: center; gap: 10px; height: 29px; padding: 0 6px 0 9px; border-top: 1px solid #e5e7ea; }
.status .sep { height: 13px; }
.tools { display: flex; align-items: center; margin-left: auto; gap: 10px; }
.tools button { gap: 4px; }
.tools .up { margin-left: 4px; }
.tools .rem { gap: 2px; }
.tools .cmt { margin-right: 12px; }
.view { width: 12px; justify-content: center; }
.tools .show { width: 24px; height: 18px; margin: 0 24px 0 12px; justify-content: center; background: #687899; color: #fff; }
.zoom { margin-right: 8px; }
.knob { width: 10px; height: 10px; margin: 0 48px 0 52px; border: 1px solid #7a808c; border-radius: 50%; }

.taskbar { display: flex; flex: none; height: 31px; background: #213743; }
.taskbar button { width: 47px; padding-left: 12px; }
.apps {
  flex: 1;
  background:
    radial-gradient(ellipse 28px 26px at 92px 18px, #c4595ce0, transparent),
    radial-gradient(ellipse 28px 24px at 140px 16px, #8c8786bb, transparent),
    radial-gradient(ellipse 30px 24px at 180px 18px, #857a56cc, transparent),
    radial-gradient(ellipse 30px 24px at 224px 20px, #50598acc, transparent),
    radial-gradient(ellipse 30px 22px at 298px 20px, #6a4674cc, transparent),
    radial-gradient(ellipse 30px 24px at 340px 18px, #5d8084bb, transparent),
    radial-gradient(ellipse 30px 24px at 380px 18px, #b05854cc, transparent),
    radial-gradient(ellipse 30px 24px at 424px 18px, #8f9799cc, transparent),
    radial-gradient(ellipse 30px 28px at 504px 18px, #6276bbee, transparent),
    radial-gradient(ellipse 30px 28px at 548px 18px, #416a9fee, transparent),
    radial-gradient(ellipse 20px 12px at 1376px 24px, #6d463caa, transparent),
    linear-gradient(#7c8185, #4a4f55 50%, #22292f);
  filter: blur(2px);
}
.tail { width: 17px; background: #182848; }
.haze { position: absolute; left: 560px; right: 18px; bottom: 0; height: 48px; background: linear-gradient(transparent, #a9acb0cc 30%, #666b72cc 52%, #27303a 78%, #101a24); mask-image: linear-gradient(90deg, transparent, #000 120px); filter: blur(1px); }
.caption { position: absolute; left: 0; right: 0; bottom: 57px; margin: 0; text-align: center; font-size: 34px; line-height: 44px; color: #fff; -webkit-text-stroke: 5px #45465a; paint-order: stroke; }
.mark { position: absolute; right: 71px; bottom: 31px; }
.lat { font: 700 62px "Liberation Sans", Arial, sans-serif; }
.han { font: 700 48px "Noto Sans CJK SC", sans-serif; }
.url { font: 32px "Noto Sans", sans-serif; }
.du { font: 38px "Liberation Sans", Arial, sans-serif; fill: #fff; stroke: #b9babd; stroke-width: 2px; }
</style>
